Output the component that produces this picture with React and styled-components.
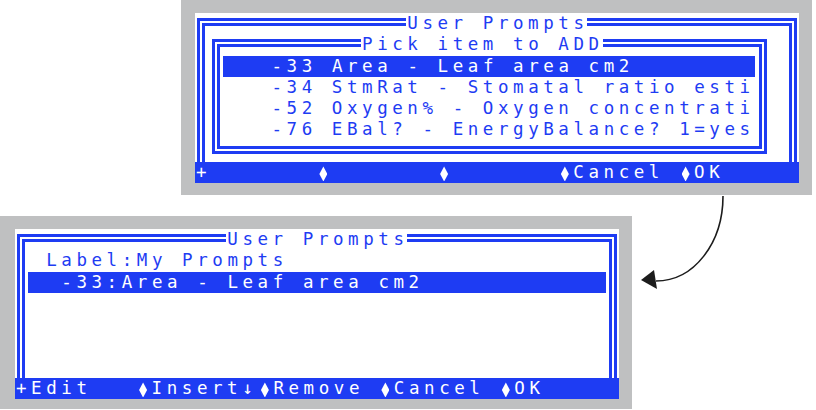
import React from "react";
import styled, { createGlobalStyle } from "styled-components";

const BLUE = "#1e3cf3";
const GREY = "#bfc0c1";
const CW = 15.1; // character cell width
const CH = 21.25; // character cell height
const FONT_SIZE = 17.5;
const TRACK = CW - FONT_SIZE * 0.60205;

const GlobalStyle = createGlobalStyle`
  html, body { margin: 0; padding: 0; background: #fff; }
  body { overflow: hidden; }
`;

const Page = styled.div`
  width: 816px;
  height: 410px;
  display: flex;
  flex-direction: column;
  align-items: flex-start;
`;

const Bezel = styled.div`
  background: ${GREY};
  padding: 13px 13px ${(p) => p.$bottom}px ${(p) => p.$inset}px;
  margin-left: ${(p) => p.$left}px;
`;

const LowerRow = styled.div`
  display: flex;
  align-items: flex-start;
  margin-top: 21px;
`;

const Screen = styled.div`
  display: grid;
  grid-template-columns: repeat(40, ${CW}px);
  grid-template-rows: repeat(8, ${CH}px);
  background: #fff;
  color: ${BLUE};
  font-family: "DejaVu Sans Mono", monospace;
  font-size: ${FONT_SIZE}px;
  line-height: ${CH}px;
`;

const Frame = styled.div`
  grid-column: ${(p) => p.$c + 1} / ${(p) => p.$c2 + 2};
  grid-row: ${(p) => p.$r + 1} / ${(p) => p.$r2 + 2};
  margin: 5px 2px ${(p) => (p.$open ? 0 : 8)}px 2px;
  border: 8px double ${BLUE};
  ${(p) => p.$open && "border-bottom: none;"}
`;

const Text = styled.div`
  grid-column: ${(p) => p.$c + 1} / span ${(p) => p.$span ?? 40 - p.$c};
  grid-row: ${(p) => p.$r + 1};
  white-space: pre;
  letter-spacing: ${TRACK}px;
  padding-left: 1px;
`;

const Title = styled(Text)`
  background: #fff;
`;

const Highlight = styled(Text)`
  background: ${BLUE};
  color: #fff;
  margin: 0 -2px;
  padding-left: ${(p) => p.$indent * CW + 3}px;
`;

const StatusBar = styled.div`
  grid-column: 1 / -1;
  grid-row: 8;
  display: flex;
  background: ${BLUE};
  color: #fff;
  white-space: pre;
  letter-spacing: ${TRACK}px;
`;

const Key = styled.span`
  display: flex;
  align-items: center;
  width: ${(p) => p.$cells * CW}px;
  padding-left: 1px;
`;

const Diamond = styled.span`
  display: inline-block;
  flex: none;
  width: 8px;
  height: 15px;
  margin: 3px 4.5px 0 2.6px;
  background: currentColor;
  clip-path: polygon(50% 0, 100% 50%, 50% 100%, 0 50%);
`;

const Arrow = styled.svg`
  flex: none;
  margin-top: -20px;
  overflow: visible;
`;

const pickItems = [
  "-33 Area - Leaf area cm2",
  "-34 StmRat - Stomatal ratio esti",
  "-52 Oxygen% - Oxygen concentrati",
  "-76 EBal? - EnergyBalance? 1=yes",
];

const pickKeys = [
  { mark: "+", label: "" },
  { mark: "d", label: "" },
  { mark: "d", label: "" },
  { mark: "d", label: "Cancel" },
  { mark: "d", label: "OK" },
];

const promptKeys = [
  { mark: "+", label: "Edit" },
  { mark: "d", label: "Insert↓" },
  { mark: "d", label: "Remove" },
  { mark: "d", label: "Cancel" },
  { mark: "d", label: "OK" },
];

const Keys = ({ keys }) => (
  <StatusBar>
    {keys.map((k, i) => (
      <Key key={i} $cells={8}>
        {k.mark === "d" ? <Diamond /> : k.mark}
        {k.label}
      </Key>
    ))}
  </StatusBar>
);

const App = () => {
  return (
    <Page>
      <GlobalStyle />
      <Bezel $left={181} $inset={14} $bottom={12}>
        <Screen>
          <Frame $c={0} $c2={39} $r={0} $r2={6} $open />
          <Title $c={14} $span={12} $r={0}>User Prompts</Title>
          <Frame $c={1} $c2={37} $r={1} $r2={6} />
          <Title $c={11} $span={16} $r={1}>Pick item to ADD</Title>
          <Highlight $c={2} $span={35} $r={2} $indent={3}>
            {pickItems[0]}
          </Highlight>
          {pickItems.slice(1).map((item, i) => (
            <Text key={item} $c={5} $span={32} $r={i + 3}>
              {item}
            </Text>
          ))}
          <Keys keys={pickKeys} />
        </Screen>
      </Bezel>

      <LowerRow>
        <Bezel $left={0} $inset={15} $bottom={10}>
          <Screen>
            <Frame $c={0} $c2={39} $r={0} $r2={6} $open />
            <Title $c={14} $span={12} $r={0}>User Prompts</Title>
            <Text $c={2} $r={1} $span={16}>Label:My Prompts</Text>
            <Highlight $c={1} $span={38} $r={2} $indent={2}>
              -33:Area - Leaf area cm2
            </Highlight>
            <Keys keys={promptKeys} />
          </Screen>
        </Bezel>
        <Arrow width="100" height="100" viewBox="0 0 100 100">
          <path
            d="M91 0 C91 47 62 85 24 85"
            fill="none"
            stroke="#1c1c1c"
            strokeWidth="1.6"
          />
          <path d="M9 84 L22 74 L25 93 Z" fill="#1c1c1c" />
        </Arrow>
      </LowerRow>
    </Page>
  );
};

export default App;
